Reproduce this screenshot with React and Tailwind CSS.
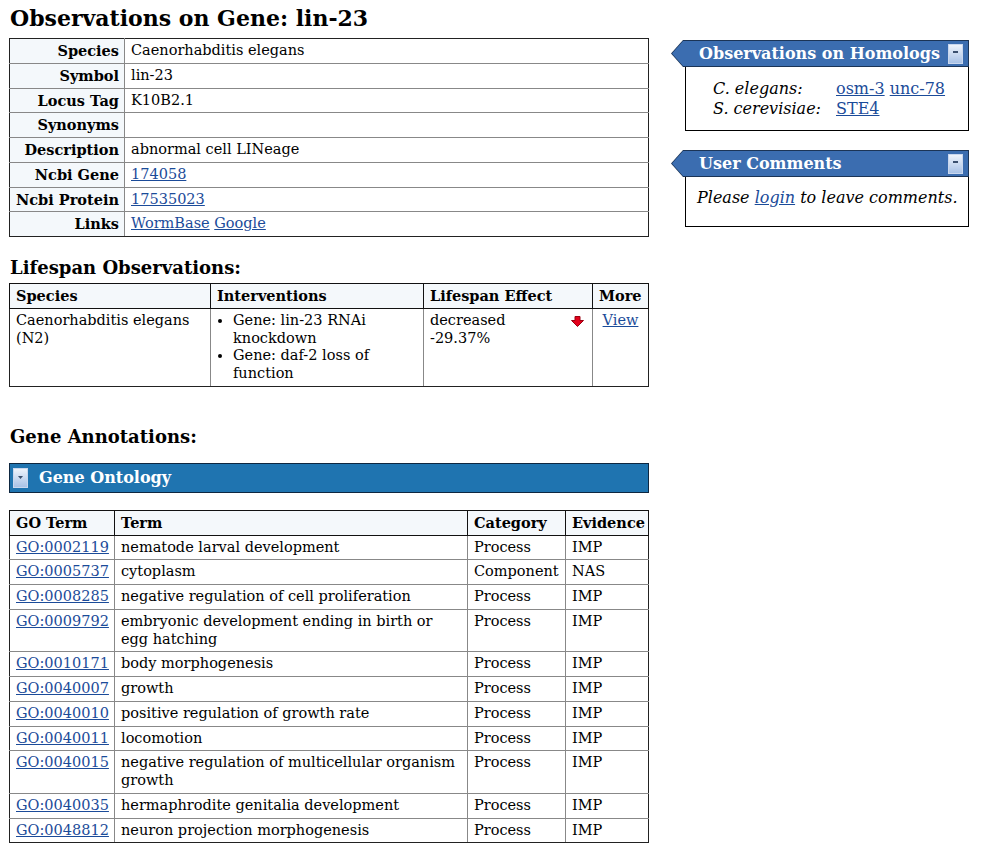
const info = [
  ["Species", "Caenorhabditis elegans"],
  ["Symbol", "lin-23"],
  ["Locus Tag", "K10B2.1"],
  ["Synonyms", ""],
  ["Description", "abnormal cell LINeage"],
  ["Ncbi Gene", [["174058"]]],
  ["Ncbi Protein", [["17535023"]]],
  ["Links", [["WormBase"], ["Google"]]],
];

const goRows = [
  ["GO:0002119", "nematode larval development", "Process", "IMP"],
  ["GO:0005737", "cytoplasm", "Component", "NAS"],
  ["GO:0008285", "negative regulation of cell proliferation", "Process", "IMP"],
  ["GO:0009792", "embryonic development ending in birth or egg hatching", "Process", "IMP"],
  ["GO:0010171", "body morphogenesis", "Process", "IMP"],
  ["GO:0040007", "growth", "Process", "IMP"],
  ["GO:0040010", "positive regulation of growth rate", "Process", "IMP"],
  ["GO:0040011", "locomotion", "Process", "IMP"],
  ["GO:0040015", "negative regulation of multicellular organism growth", "Process", "IMP"],
  ["GO:0040035", "hermaphrodite genitalia development", "Process", "IMP"],
  ["GO:0048812", "neuron projection morphogenesis", "Process", "IMP"],
];

const link = "text-[#1b4b99] underline";

// border helper: gray inside, dark on the outer edge of the table
function cellBorder(r, c, rows, cols) {
  return [
    "border border-[#888]",
    c === 0 ? "border-l-[#222]" : "",
    c === cols - 1 ? "border-r-[#222]" : "",
    r === 0 ? "border-t-[#222]" : "",
    r === rows - 1 ? "border-b-[#222]" : "",
  ].join(" ");
}

function MinusBtn() {
  return (
    <span className="flex items-center justify-center w-[15px] h-[20px] border border-[#c9d7ee] bg-gradient-to-b from-[#eef3fb] to-[#a9c2e6]">
      <span className="block w-[5px] h-[2px] bg-[#3a4f6e] -mt-[3px]" />
    </span>
  );
}

function SideBox({ title, children }) {
  return (
    <div>
      <div className="-ml-[14px] bg-[#1b3456] p-[1px] [clip-path:polygon(12px_0,100%_0,100%_100%,12px_100%,0_50%)]">
        <div className="flex items-center justify-between h-[25px] pl-[27px] pr-[5px] bg-[#3b6db0] [clip-path:polygon(11px_0,100%_0,100%_100%,11px_100%,0_50%)]">
          <span className="text-white font-bold text-[16px] leading-[25px] whitespace-nowrap">{title}</span>
          <MinusBtn />
        </div>
      </div>
      <div className="border border-black border-t-0 text-[16px] leading-[20px]">{children}</div>
    </div>
  );
}

function RedArrow() {
  return (
    <svg width="13" height="11" viewBox="0 0 13 11" className="float-right mt-[4px] mr-[2px]">
      <path d="M4 0.5h5v4h3.5L6.5 10.5L0.5 4.5H4z" fill="#e3001b" stroke="#9a0010" strokeWidth="1" />
    </svg>
  );
}

export default function App() {
  return (
    <div className="flex font-['DejaVu_Serif',serif] text-[14.5px] text-black bg-white min-h-[845px]">
      <div className="w-[640px] ml-[9px] shrink-0">
        <h1 className="text-[22px] font-bold leading-[28px] pt-[4px] mb-[6px] pl-[1px]">
          Observations on Gene: lin-23
        </h1>

        <table className="w-full table-fixed border-collapse leading-[17.75px]">
          <colgroup>
            <col className="w-[115px]" />
            <col />
          </colgroup>
          <tbody>
            {info.map(([label, value], r) => (
              <tr key={label}>
                <td className={`${cellBorder(r, 0, info.length, 2)} bg-[#f4f8fb] font-bold text-right pr-[5px] pl-[2px] py-[3px] whitespace-nowrap`}>
                  {label}
                </td>
                <td className={`${cellBorder(r, 1, info.length, 2)} px-[6px] py-[3px]`}>
                  {Array.isArray(value)
                    ? value.map(([t], i) => (
                        <span key={t}>
                          {i > 0 && " "}
                          <a href="#" className={link}>{t}</a>
                        </span>
                      ))
                    : value}
                </td>
              </tr>
            ))}
          </tbody>
        </table>

        <h2 className="text-[18px] font-bold leading-[22px] mt-[20px] mb-[4px] pl-[1px]">Lifespan Observations:</h2>

        <table className="w-full table-fixed border-collapse leading-[17.75px]">
          <colgroup>
            <col className="w-[201px]" />
            <col className="w-[213px]" />
            <col className="w-[169px]" />
            <col />
          </colgroup>
          <thead>
            <tr className="bg-[#f4f8fb]">
              {["Species", "Interventions", "Lifespan Effect", "More"].map((h) => (
                <th key={h} className="border border-[#111] text-left font-bold px-[6px] py-[3px]">{h}</th>
              ))}
            </tr>
          </thead>
          <tbody>
            <tr className="align-top">
              <td className={`${cellBorder(1, 0, 2, 4)} px-[6px] py-[3px]`}>Caenorhabditis elegans (N2)</td>
              <td className={`${cellBorder(1, 1, 2, 4)} px-[6px] py-[3px]`}>
                <ul className="list-disc pl-[16px]">
                  <li>Gene: lin-23 RNAi knockdown</li>
                  <li>Gene: daf-2 loss of function</li>
                </ul>
              </td>
              <td className={`${cellBorder(1, 2, 2, 4)} px-[6px] py-[3px]`}>
                <RedArrow />
                decreased
                <br />
                -29.37%
              </td>
              <td className={`${cellBorder(1, 3, 2, 4)} px-[4px] py-[3px] text-center`}>
                <a href="#" className={link}>View</a>
              </td>
            </tr>
          </tbody>
        </table>

        <h2 className="text-[18px] font-bold leading-[22px] mt-[39px] pl-[1px]">Gene Annotations:</h2>

        <div className="mt-[15px] h-[30px] flex items-center gap-[11px] pl-[3px] bg-[#1f74b0] border border-[#0e2740]">
          <span className="flex items-center justify-center w-[15px] h-[20px] border border-[#c9d7ee] bg-gradient-to-b from-[#eef3fb] to-[#a9c2e6]">
            <svg width="5" height="3" viewBox="0 0 5 3"><path d="M0 0h5L2.5 3z" fill="#3a4f6e" /></svg>
          </span>
          <span className="text-white font-bold text-[16px]">Gene Ontology</span>
        </div>

        <table className="mt-[17px] w-full table-fixed border-collapse leading-[17.75px]">
          <colgroup>
            <col className="w-[105px]" />
            <col className="w-[353px]" />
            <col className="w-[98px]" />
            <col />
          </colgroup>
          <thead>
            <tr className="bg-[#f4f8fb]">
              {["GO Term", "Term", "Category", "Evidence"].map((h) => (
                <th key={h} className="border border-[#111] text-left font-bold px-[6px] py-[3px] whitespace-nowrap">{h}</th>
              ))}
            </tr>
          </thead>
          <tbody>
            {goRows.map((row, r) => (
              <tr key={row[0]} className="align-top">
                {row.map((v, c) => (
                  <td key={c} className={`${cellBorder(r + 1, c, goRows.length + 1, 4)} pl-[6px] pr-[4px] py-[3px]`}>
                    {c === 0 ? <a href="#" className={link}>{v}</a> : v}
                  </td>
                ))}
              </tr>
            ))}
          </tbody>
        </table>
      </div>

      <div className="w-[284px] ml-[36px] mt-[40px] shrink-0 flex flex-col gap-[19px]">
        <SideBox title="Observations on Homologs">
          <div className="pl-[27px] pt-[12px] pb-[11px]">
            <div className="flex">
              <span className="italic w-[123px]">C. elegans:</span>
              <span>
                <a href="#" className={link}>osm-3</a> <a href="#" className={link}>unc-78</a>
              </span>
            </div>
            <div className="flex">
              <span className="italic w-[123px]">S. cerevisiae:</span>
              <a href="#" className={link}>STE4</a>
            </div>
          </div>
        </SideBox>
        <SideBox title="User Comments">
          <p className="italic pl-[11px] pt-[11px] pb-[18px]">
            Please <a href="#" className={link}>login</a> to leave comments.
          </p>
        </SideBox>
      </div>
    </div>
  );
}
